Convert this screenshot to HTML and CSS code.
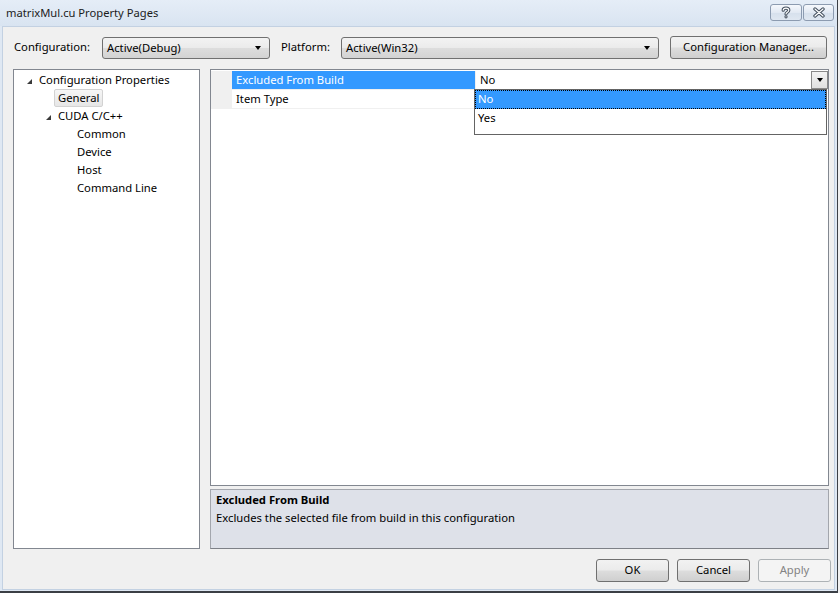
FILE: index.html
```html
<!DOCTYPE html>
<html lang="en">
<head>
    <meta charset="UTF-8">
    <title>matrixMul.cu Property Pages</title>
    <link rel="stylesheet" href="styles.css">
</head>
<body>
    <div class="window">
        <div class="titlebar">
            <span class="title">matrixMul.cu Property Pages</span>
            <div class="caption-buttons">
                <div class="caption-btn help">
                    <svg width="12" height="13" viewBox="0 0 12 13">
                        <g fill="none" stroke-linecap="round" stroke-linejoin="round">
                            <path d="M3.2 4.2 C3.2 1.4 8.8 1.4 8.8 4.2 C8.8 6.2 6 6.2 6 8" stroke="#44505f" stroke-width="3.2"/>
                            <path d="M3.2 4.2 C3.2 1.4 8.8 1.4 8.8 4.2 C8.8 6.2 6 6.2 6 8" stroke="#fff" stroke-width="1.1"/>
                        </g>
                        <circle cx="6" cy="10.8" r="1.6" fill="#44505f"/>
                        <circle cx="6" cy="10.8" r="0.6" fill="#fff"/>
                    </svg>
                </div>
                <div class="caption-btn close">
                    <svg width="14" height="11" viewBox="0 0 14 11">
                        <g stroke-linecap="round">
                            <path d="M3 2 L11 9 M11 2 L3 9" stroke="#44505f" stroke-width="3.4"/>
                            <path d="M3 2 L11 9 M11 2 L3 9" stroke="#fff" stroke-width="1.2"/>
                        </g>
                    </svg>
                </div>
            </div>
        </div>

        <div class="client">
            <div class="toolbar">
                <span class="field-label config-label">Configuration:</span>
                <div class="combo config-combo">
                    <span>Active(Debug)</span>
                    <span class="combo-arrow"></span>
                </div>
                <span class="field-label platform-label">Platform:</span>
                <div class="combo platform-combo">
                    <span>Active(Win32)</span>
                    <span class="combo-arrow"></span>
                </div>
                <div class="btn manager-btn">Configuration Manager...</div>
            </div>

            <div class="main">
                <div class="tree">
                    <div class="tree-row level-0">
                        <span class="expander"></span>
                        <span class="tree-text">Configuration Properties</span>
                    </div>
                    <div class="tree-row level-1 leaf">
                        <span class="tree-text selected">General</span>
                    </div>
                    <div class="tree-row level-1">
                        <span class="expander"></span>
                        <span class="tree-text">CUDA C/C++</span>
                    </div>
                    <div class="tree-row level-2 leaf"><span class="tree-text">Common</span></div>
                    <div class="tree-row level-2 leaf"><span class="tree-text">Device</span></div>
                    <div class="tree-row level-2 leaf"><span class="tree-text">Host</span></div>
                    <div class="tree-row level-2 leaf"><span class="tree-text">Command Line</span></div>
                </div>

                <div class="props">
                    <div class="grid">
                        <div class="grid-row">
                            <div class="gutter"></div>
                            <div class="prop-name active">Excluded From Build</div>
                            <div class="prop-value">
                                <span>No</span>
                                <span class="drop-btn"><span class="combo-arrow"></span></span>
                            </div>
                        </div>
                        <div class="grid-row">
                            <div class="gutter"></div>
                            <div class="prop-name">Item Type</div>
                            <div class="prop-value"></div>
                        </div>

                        <ul class="dropdown">
                            <li class="option current">No</li>
                            <li class="option">Yes</li>
                        </ul>
                    </div>

                    <div class="desc">
                        <div class="desc-title">Excluded From Build</div>
                        <div>Excludes the selected file from build in this configuration</div>
                    </div>
                </div>
            </div>

            <div class="footer">
                <div class="btn">OK</div>
                <div class="btn">Cancel</div>
                <div class="btn disabled">Apply</div>
            </div>
        </div>
    </div>
</body>
</html>
```

FILE: styles.css
```css
:root {
    --face: #f0f0f0;
    --select: #3399ff;
    --border: #828790;
    --frame: #dfe8f3;
    --text: #000;
}

* {
    box-sizing: border-box;
    margin: 0;
    padding: 0;
}

body {
    font-family: "Noto Sans", "Open Sans", sans-serif;
    font-size: 11.25px;
    line-height: 18px;
    color: var(--text);
    background: var(--face);
}

.window {
    width: 838px;
    height: 593px;
    background: var(--frame);
    border-right: 1px solid #3b3f45;
    border-bottom: 2px solid #3b3f45;
    display: flex;
    flex-direction: column;
}

/* caption */
.titlebar {
    height: 26px;
    flex: none;
    display: flex;
    align-items: flex-start;
    justify-content: space-between;
    background: linear-gradient(#e5edf7, #d9e4f1);
}

.title {
    margin: 4px 0 0 6px;
    font-size: 11.2px;
    color: #1b1b1b;
}

.caption-buttons {
    display: flex;
    gap: 1px;
    margin: 4px 3px 0 0;
}

.caption-btn {
    height: 17px;
    display: flex;
    align-items: center;
    justify-content: center;
    border: 1px solid #8c9bb0;
    border-radius: 3px;
    background: linear-gradient(#f5f8fc, #e2e9f3 50%, #d6e0ec 51%, #dfe7f1);
}

.caption-btn.help { width: 32px; }
.caption-btn.close { width: 31px; }

/* client area */
.client {
    flex: 1;
    margin: 0 2px 1px 2px;
    border: 1px solid #c3d1e2;
    background: var(--face);
    padding: 9px 5px 0 10px;
    display: flex;
    flex-direction: column;
}

.toolbar {
    height: 23px;
    display: flex;
    align-items: center;
}

.field-label {
    flex: none;
    padding-bottom: 1px;
}

.config-label {
    width: 89px;
    padding-left: 1px;
}

.platform-label {
    width: 71px;
    padding-left: 11px;
}

.combo {
    height: 22px;
    flex: none;
    display: flex;
    align-items: center;
    justify-content: space-between;
    padding: 0 8px 0 4px;
    border: 1px solid #707070;
    border-radius: 3px;
    background: linear-gradient(#f3f3f3, #ebebeb 48%, #dddddd 52%, #d3d3d3);
}

.config-combo { width: 168px; }
.platform-combo { width: 318px; }

.combo-arrow {
    width: 0;
    height: 0;
    border-left: 3.5px solid transparent;
    border-right: 3.5px solid transparent;
    border-top: 4px solid #000;
}

.btn {
    height: 23px;
    display: flex;
    align-items: center;
    justify-content: center;
    border: 1px solid #707070;
    border-radius: 3px;
    background: linear-gradient(#f2f2f2, #ebebeb 48%, #dddddd 52%, #cfcfcf);
    padding-bottom: 1px;
}

.manager-btn {
    width: 157px;
    margin-left: 11px;
}

.btn.disabled {
    color: #838383;
    border-color: #adb2b5;
    background: #f4f4f4;
}

/* tree + grid */
.main {
    height: 480px;
    margin-top: 10px;
    display: flex;
    gap: 10px;
}

.tree {
    width: 187px;
    flex: none;
    background: #fff;
    border: 1px solid var(--border);
    padding-top: 1px;
}

.tree-row {
    height: 18px;
    display: flex;
    align-items: center;
    white-space: nowrap;
}

.level-0 { padding-left: 13px; }
.level-1 { padding-left: 32px; }
.level-2 { padding-left: 51px; }
.leaf .tree-text { margin-left: 12px; }

.expander {
    width: 12px;
    height: 18px;
    flex: none;
    position: relative;
}

/* expanded node glyph */
.expander::before {
    content: "";
    position: absolute;
    left: 0;
    top: 8px;
    width: 0;
    height: 0;
    border-left: 5px solid transparent;
    border-bottom: 5px solid #3a3a3a;
}

.tree-text.selected {
    margin-left: 8px;
    padding: 0 3px;
    height: 18px;
    line-height: 16px;
    border: 1px solid #d2d2d2;
    border-radius: 2px;
    background: linear-gradient(#f6f6f6, #e6e6e6);
}

.props {
    flex: 1;
    display: flex;
    flex-direction: column;
    gap: 3px;
}

.grid {
    height: 417px;
    flex: none;
    position: relative;
    background: #fff;
    border: 1px solid var(--border);
    padding-top: 1px;
}

.grid-row {
    display: flex;
    height: 19px;
    border-bottom: 1px solid var(--face);
}

.gutter {
    width: 21px;
    background: var(--face);
}

.prop-name {
    width: 243px;
    padding-left: 4px;
}

.prop-name.active {
    background: var(--select);
    color: #fff;
}

.prop-value {
    flex: 1;
    display: flex;
    justify-content: space-between;
    padding-left: 4px;
    border-left: 1px solid var(--face);
}

.drop-btn {
    width: 17px;
    height: 18px;
    display: flex;
    align-items: center;
    justify-content: center;
    border: 1px solid #8a8a8a;
    background: linear-gradient(#f4f4f4, #e0e0e0);
}

.dropdown {
    position: absolute;
    left: 263px;
    top: 19px;
    width: 353px;
    height: 46px;
    list-style: none;
    background: #fff;
    border: 1px solid #646464;
}

.option {
    height: 18px;
    padding-left: 3px;
}

.option.current {
    height: 19px;
    background: var(--select);
    color: #fff;
    outline: 1px dotted #000;
    outline-offset: -1px;
}

.desc {
    flex: 1;
    background: #dee1e9;
    border: 1px solid #a3a6ad;
    border-bottom-color: #7d8087;
    padding: 1px 5px;
}

.desc-title {
    font-weight: bold;
}

.footer {
    display: flex;
    justify-content: flex-end;
    gap: 8px;
    margin: 10px -2px 0 0;
}

.footer .btn {
    width: 73px;
}
```
